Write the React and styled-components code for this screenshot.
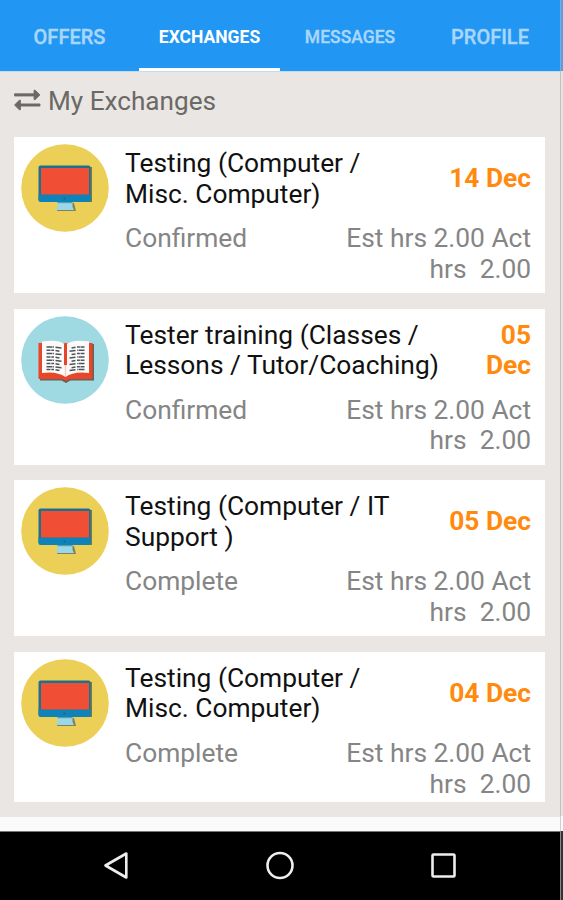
import React from "react";
import styled, { createGlobalStyle } from "styled-components";

const GlobalStyle = createGlobalStyle`
  * { box-sizing: border-box; }
  body { margin: 0; background: #000; font-family: Roboto, sans-serif; }
`;

const Phone = styled.div`
  display: flex;
  width: 563px;
  height: 900px;
  overflow: hidden;
`;

const Screen = styled.div`
  display: flex;
  flex-direction: column;
  width: 560px;
  height: 900px;
`;

const Edge = styled.div`
  display: grid;
  grid-template-rows: 71px 745px 15px 69px;
  width: 3px;
`;

const EdgePart = styled.div`
  background: ${(p) => p.$color};
  border-left: 1px solid ${(p) => p.$line};
`;

const TabBar = styled.nav`
  display: grid;
  grid-template-columns: 139px 141px 140px 140px;
  flex: 0 0 71px;
  background: #2196f3;
  border-bottom: 1px solid #c3dcf0;
`;

const Tab = styled.div`
  display: flex;
  align-items: center;
  justify-content: center;
  height: 71px;
  padding: ${(p) => (p.$active ? "5px 0 0" : "2px 0 0 0")};
  border-bottom: ${(p) => (p.$active ? "3px solid #fff" : "0")};
  color: ${(p) => (p.$active ? "#fff" : "#a9d6fb")};
  font-size: ${(p) => p.$size}px;
  font-weight: ${(p) => (p.$active ? 700 : 500)};
  -webkit-text-stroke: ${(p) => (p.$active ? "0" : "0.35px #a9d6fb")};
  white-space: nowrap;
`;

const Main = styled.main`
  flex: 0 0 745px;
  padding: 0 15px 15px 14px;
  background: #e9e6e3;
  overflow: hidden;
`;

const Heading = styled.h1`
  display: flex;
  align-items: center;
  gap: 7px;
  height: 65px;
  margin: 0;
  padding-bottom: 8px;
  color: #6b6966;
  font-size: 26.15px;
  font-weight: 400;
`;

const List = styled.div`
  display: flex;
  flex-direction: column;
  gap: 15.4px;
  height: 665px;
  overflow: hidden;
`;

const Card = styled.article`
  display: grid;
  grid-template-columns: 88px 1fr;
  column-gap: 16px;
  flex: 0 0 156.2px;
  height: 156.2px;
  padding: 7px 14px 0 7px;
  background: #fff;
`;

const Details = styled.div`
  padding-top: 4px;
  font-size: 26.35px;
  line-height: 30.6px;
`;

const Row = styled.div`
  display: flex;
  justify-content: space-between;
  align-items: ${(p) => p.$align};

  & + & {
    margin-top: 14px;
  }
`;

const Title = styled.div`
  color: #111;
  white-space: pre;
`;

const DateText = styled.div`
  color: #ff8a0d;
  font-weight: 700;
  text-align: right;
  white-space: pre;
`;

const Status = styled.div`
  color: #858585;
`;

const Hours = styled.div`
  color: #858585;
  text-align: right;
  white-space: pre;
`;

const Footer = styled.div`
  flex: 0 0 15px;
  background: #fafafa;
  border-bottom: 1px solid #777;
`;

const NavBar = styled.footer`
  display: flex;
  justify-content: space-between;
  align-items: center;
  flex: 0 0 69px;
  padding: 0 101px 4px 102px;
  background: #000;
`;

const Icon = styled.svg`
  display: block;
  flex: none;
`;

function ComputerIcon() {
  return (
    <Icon width="88" height="88" viewBox="0 0 88 88">
      <circle cx="44" cy="44" r="43.8" fill="#eccf56" />
      <path d="M20 23h51v35H20z" fill="#6d7a52" />
      <rect x="17.5" y="21.5" width="52" height="36" rx="2" fill="#1d708e" />
      <path d="M17.5 50.5h52V56a2 2 0 0 1-2 2h-48a2 2 0 0 1-2-2z" fill="#0e83ba" />
      <rect x="20" y="24" width="48" height="26.5" fill="#f04e35" />
      <circle cx="43.5" cy="54.5" r="1" fill="#20617f" />
      <path d="M38 59h15l2 8H36z" fill="#80835a" />
      <path d="M36.5 58h15v5l1.500 3H34.500l2-3z" fill="#9ad7e7" />
      <path d="M36.5 58h15v1.200h-15z" fill="#5b9da9" />
    </Icon>
  );
}

function BookIcon() {
  const lines = [31, 34.3, 37.6, 40.9, 44.2, 47.5, 50.8, 53.5];
  return (
    <Icon width="88" height="88" viewBox="0 0 88 88">
      <circle cx="44" cy="44" r="43.8" fill="#9fd9e2" />
      <path d="M19 28h54v36.500H49.500l-4.500 2.500-4.500-2.500H19z" fill="#67605d" />
      <path d="M17.500 27h54v36H49q-4 3.500-8 0H17.500z" fill="#e74628" />
      <path d="M21 25.500q17-2.500 23.500 3v32.500Q36 55 21 57z" fill="#fffaf7" />
      <path d="M68 25.500q-16-2.500-23.500 3v32.500q8-6 23.500-4z" fill="#fffaf7" />
      <path d="M44.500 28v21" stroke="#e5452b" strokeWidth="3" />
      <path d="M44.500 49v11" stroke="#f5cfc5" strokeWidth="1.500" />
      {lines.map((y, i) => (
        <g key={y} stroke="#465660" strokeWidth="1.500">
          <path d={`M25.500 ${y}h7.500m1.500.300l${i % 2 ? 4 : 6} .700`} strokeDasharray={i % 2 ? "4 .8" : "6 .6"} />
          <path d={`M63.500 ${y}h-7.500m-1.500.300l${i % 2 ? -6 : -4} .700`} strokeDasharray={i % 2 ? "6 .8" : "4 .6"} />
        </g>
      ))}
    </Icon>
  );
}

function ExchangeIcon() {
  return (
    <Icon width="27" height="24" viewBox="0 0 27 24" fill="#6b6966" stroke="#6b6966" strokeWidth="0.8" strokeLinejoin="round">
      <path d="M.5 4.800h19.500V1.200h1.200L26 5.900l-4.800 4.700H20V7H.5z" />
      <path d="M26 14.900H6.500v-3.600H5.300L.5 16l4.800 4.700h1.200v-3.600H26z" />
    </Icon>
  );
}

const tabs = [
  { label: "OFFERS", size: 20 },
  { label: "EXCHANGES", size: 17.5, active: true },
  { label: "MESSAGES", size: 17.5 },
  { label: "PROFILE", size: 20 },
];

const exchanges = [
  { title: "Testing (Computer /\nMisc. Computer)", date: "14 Dec", status: "Confirmed" },
  { title: "Tester training (Classes /\nLessons / Tutor/Coaching)", date: "05\nDec", status: "Confirmed", book: true },
  { title: "Testing (Computer / IT\nSupport )", date: "05 Dec", status: "Complete" },
  { title: "Testing (Computer /\nMisc. Computer)", date: "04 Dec", status: "Complete" },
];

export default function App() {
  return (
    <Phone>
      <GlobalStyle />
      <Screen>
        <TabBar>
          {tabs.map((t) => (
            <Tab key={t.label} $size={t.size} $active={t.active}>{t.label}</Tab>
          ))}
        </TabBar>
        <Main>
          <Heading><ExchangeIcon />My Exchanges</Heading>
          <List>
            {exchanges.map((e, i) => (
              <Card key={i}>
                {e.book ? <BookIcon /> : <ComputerIcon />}
                <Details>
                  <Row $align="center">
                    <Title>{e.title}</Title>
                    <DateText>{e.date}</DateText>
                  </Row>
                  <Row $align="flex-start">
                    <Status>{e.status}</Status>
                    <Hours>{"Est hrs 2.00 Act\nhrs  2.00"}</Hours>
                  </Row>
                </Details>
              </Card>
            ))}
          </List>
        </Main>
        <Footer />
        <NavBar>
          <Icon width="28" height="30" viewBox="0 0 28 30" fill="none" stroke="#eee" strokeWidth="2.6" strokeLinejoin="round">
            <path d="M3.500 15.500 24.300 3.500v24z" />
          </Icon>
          <Icon width="30" height="30" viewBox="0 0 30 30" fill="none" stroke="#eee" strokeWidth="2.6">
            <circle cx="15" cy="15.5" r="12.5" />
          </Icon>
          <Icon width="30" height="30" viewBox="0 0 30 30" fill="none" stroke="#eee" strokeWidth="2.6">
            <rect x="3.5" y="4.5" width="22" height="22" rx="1" />
          </Icon>
        </NavBar>
      </Screen>
      <Edge>
        <EdgePart $color="#5b9ee0" $line="#7fa9d6" />
        <EdgePart $color="#e6e3e1" $line="#c2bfbd" />
        <EdgePart $color="#fafafa" $line="#cfcfcf" />
        <EdgePart $color="#333" $line="#888" />
      </Edge>
    </Phone>
  );
}
